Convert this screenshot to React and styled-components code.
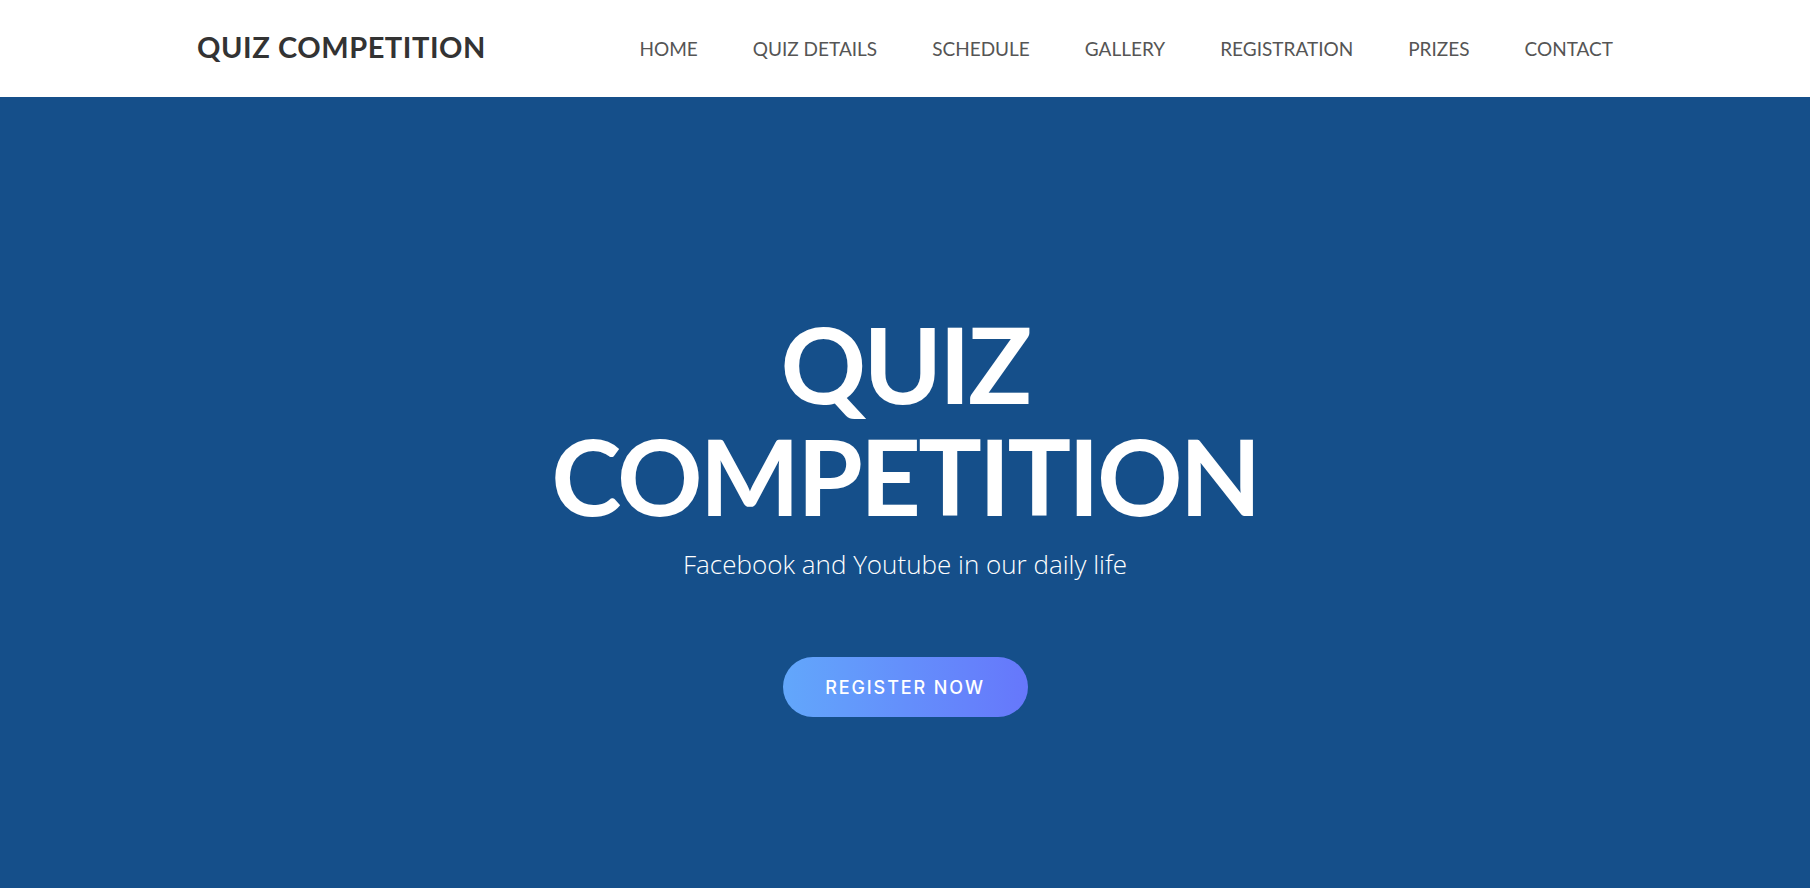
import styled, { createGlobalStyle } from "styled-components";

const GlobalStyle = createGlobalStyle`
  html, body {
    margin: 0;
    padding: 0;
    height: 100%;
  }
  body {
    font-family: "Lato", "Open Sans", sans-serif;
    overflow: hidden;
  }
  #root {
    height: 100%;
  }
`;

const Page = styled.div`
  height: 100vh;
  display: flex;
  flex-direction: column;
`;

const Header = styled.header`
  height: 97px;
  flex-shrink: 0;
  background: #ffffff;
  display: flex;
  justify-content: center;
`;

const HeaderInner = styled.div`
  width: 1416px;
  display: flex;
  align-items: center;
  justify-content: space-between;
`;

const Logo = styled.a`
  font-family: "Lato", sans-serif;
  font-weight: 700;
  font-size: 29px;
  letter-spacing: 0.55px;
  color: #333333;
  text-decoration: none;
  margin-top: -4px;
`;

const Nav = styled.nav`
  display: flex;
  gap: 55px;
  margin-top: -1px;
`;

const NavLink = styled.a`
  font-family: "Lato", sans-serif;
  font-size: 19px;
  color: #555555;
  text-decoration: none;
  text-transform: uppercase;
`;

const Hero = styled.section`
  flex: 1;
  background: #154f8a;
  display: flex;
  flex-direction: column;
  align-items: center;
  padding-top: 210px;
`;

const Title = styled.h1`
  margin: 0;
  font-family: "Lato", sans-serif;
  font-weight: 700;
  font-size: 106px;
  line-height: 112px;
  letter-spacing: -2.8px;
  color: #ffffff;
  text-align: center;
`;

const Subtitle = styled.p`
  margin: 15px 0 0;
  font-family: "Open Sans", sans-serif;
  font-weight: 300;
  font-size: 26px;
  color: #ffffff;
`;

const RegisterButton = styled.a`
  margin-top: 75px;
  width: 245px;
  height: 60px;
  border-radius: 30px;
  background: linear-gradient(90deg, #62a7fb 0%, #6677fb 100%);
  display: flex;
  align-items: center;
  justify-content: center;
  font-family: "Inter", sans-serif;
  font-weight: 500;
  font-size: 18px;
  letter-spacing: 1.9px;
  color: #ffffff;
  text-decoration: none;
`;

const links = ["Home", "Quiz Details", "Schedule", "Gallery", "Registration", "Prizes", "Contact"];

export default function App() {
  return (
    <Page>
      <GlobalStyle />
      <Header>
        <HeaderInner>
          <Logo href="#">QUIZ COMPETITION</Logo>
          <Nav>
            {links.map((l) => (
              <NavLink key={l} href="#">{l}</NavLink>
            ))}
          </Nav>
        </HeaderInner>
      </Header>
      <Hero>
        <Title>QUIZ<br />COMPETITION</Title>
        <Subtitle>Facebook and Youtube in our daily life</Subtitle>
        <RegisterButton href="#">REGISTER NOW</RegisterButton>
      </Hero>
    </Page>
  );
}
